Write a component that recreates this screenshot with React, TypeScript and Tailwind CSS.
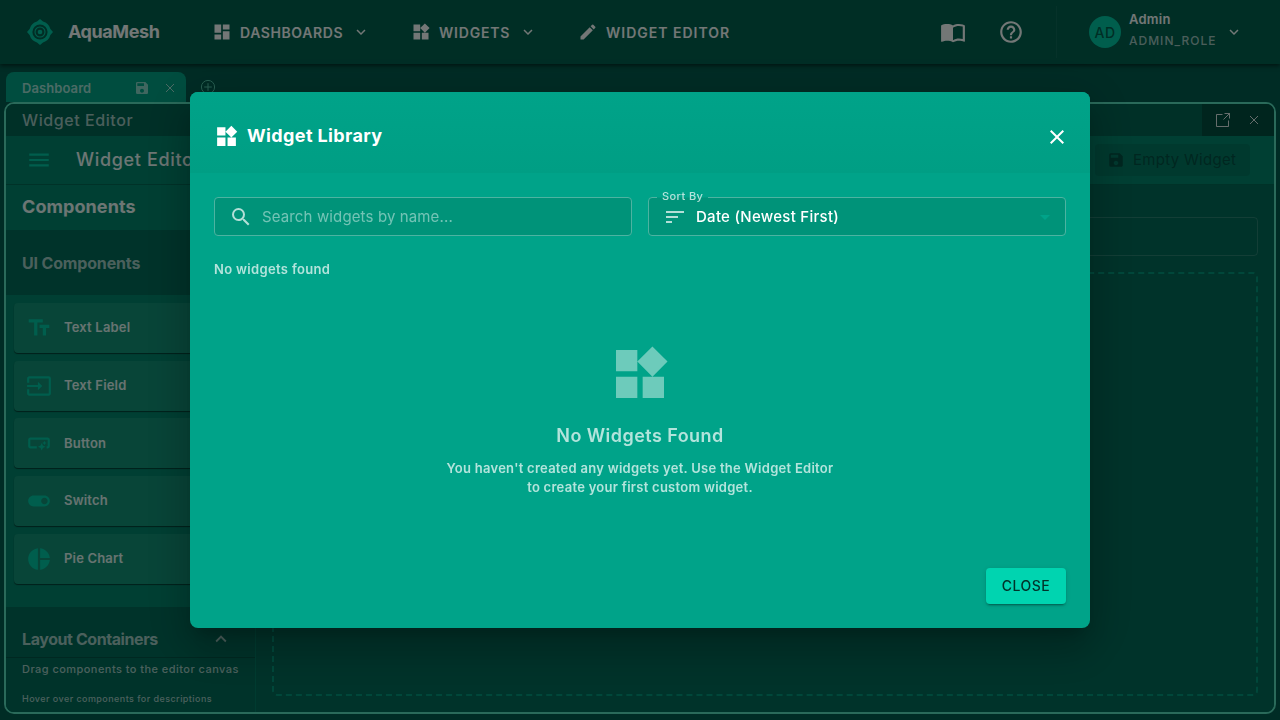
import React from "react";
import {
  MdArrowDropDown, MdClose, MdDashboard, MdEdit, MdHelpOutline, MdInput, MdKeyboardArrowDown,
  MdKeyboardArrowUp, MdMenu, MdPieChart, MdSave, MdSearch, MdSmartButton, MdSort, MdTextFields,
  MdToggleOn, MdWidgets,
} from "react-icons/md";

function Logo() {
  return (
    <svg viewBox="0 0 26 26" className="size-[26px] shrink-0 text-[#00bc9a]">
      <path d="M13 0 L16 2.6 A10.8 10.8 0 0 1 23.4 10 L26 13 L23.4 16 A10.8 10.8 0 0 1 16 23.4 L13 26 L10 23.4 A10.8 10.8 0 0 1 2.6 16 L0 13 L2.6 10 A10.8 10.8 0 0 1 10 2.6 Z" fill="currentColor" />
      <circle cx="13" cy="13" r="7.6" fill="#005c4b" />
      <circle cx="13" cy="13" r="5" fill="none" stroke="currentColor" strokeWidth="1.1" />
      <circle cx="13" cy="13" r="2.3" fill="currentColor" />
    </svg>
  );
}

function BookIcon() {
  return (
    <svg viewBox="0 0 24 24" className="size-[26px]" fill="currentColor">
      <path d="M21 5c-1.11-.35-2.33-.5-3.5-.5-1.95 0-4.05.4-5.5 1.5-1.45-1.1-3.55-1.5-5.5-1.5S2.45 4.9 1 6v14.65c0 .25.25.5.5.5.1 0 .15-.05.25-.05C3.1 20.45 5.05 20 6.5 20c1.95 0 4.05.4 5.5 1.5 1.35-.85 3.8-1.5 5.5-1.5 1.65 0 3.35.3 4.75 1.05.1.05.15.05.25.05.25 0 .5-.25.5-.5V6c-.6-.45-1.25-.75-2-1zm0 13.5c-1.1-.35-2.3-.5-3.5-.5-1.7 0-4.15.65-5.5 1.5V8c1.35-.85 3.8-1.5 5.5-1.5 1.2 0 2.4.15 3.5.5v11.5z" />
    </svg>
  );
}

function ThinClose() {
  return (
    <svg viewBox="0 0 10 10" className="size-[10px]" stroke="currentColor" strokeWidth="1">
      <path d="M1 1 L9 9 M9 1 L1 9" />
    </svg>
  );
}

function PopoutIcon() {
  return (
    <svg viewBox="0 0 14 14" className="size-[14px]" fill="none" stroke="currentColor" strokeWidth="1">
      <path d="M6.5 1.5 H0.5 V13.5 H12.5 V7.5 M8.5 0.5 H13.5 V5.5 M13.5 0.5 L7.5 6.5" />
    </svg>
  );
}

function Header() {
  return (
    <header className="relative flex h-16 shrink-0 items-center bg-[#005c4b] pl-[27px] text-white/90 shadow-[0_2px_4px_rgba(0,0,0,0.5)]">
      <Logo />
      <span className="ml-[15px] w-[144px] pb-px text-[18px] font-bold tracking-[-0.42px]">AquaMesh</span>
      <div className="flex w-[199px] items-center text-[14px] font-semibold">
        <MdDashboard className="size-[20px]" />
        <span className="ml-2 w-[112px] tracking-[0.6px]">DASHBOARDS</span>
        <MdKeyboardArrowDown className="size-[18px]" />
      </div>
      <div className="flex w-[167px] items-center text-[14px] font-semibold">
        <MdWidgets className="size-[20px]" />
        <span className="ml-[8px] w-[80px] tracking-[0.8px]">WIDGETS</span>
        <MdKeyboardArrowDown className="size-[18px]" />
      </div>
      <div className="flex items-center text-[14px] font-semibold">
        <MdEdit className="size-[20px]" />
        <span className="ml-2 tracking-[1px]">WIDGET EDITOR</span>
      </div>
      <div className="ml-auto flex items-center">
        <BookIcon />
        <MdHelpOutline className="ml-[32px] size-[26px]" />
        <div className="ml-[32px] h-[52px] w-px bg-white/5" />
        <div className="ml-8 flex size-8 items-center justify-center rounded-full bg-[#00bc9a] text-[14px] font-medium tracking-[0.6px] text-[#005c4b]">AD</div>
        <div className="ml-2 w-[96px] -translate-y-[2px]">
          <div className="text-[13px] font-semibold leading-[19px] tracking-[0.25px]">Admin</div>
          <div className="mt-[2px] text-[12px] font-medium leading-5 tracking-[1px] text-white/60">ADMIN_ROLE</div>
        </div>
        <MdKeyboardArrowDown className="mr-[37px] size-[18px]" />
      </div>
    </header>
  );
}

const components = [
  { label: "Text Label", icon: MdTextFields },
  { label: "Text Field", icon: MdInput },
  { label: "Button", icon: MdSmartButton },
  { label: "Switch", icon: MdToggleOn },
  { label: "Pie Chart", icon: MdPieChart },
];

function Sidebar() {
  return (
    <aside className="flex w-[250px] shrink-0 flex-col border-r border-[#00705c]/50 bg-[#007e66]">
      <h2 className="flex h-[45px] items-center pb-[2px] pl-4 text-[18px] font-bold tracking-[0.08px] text-white/85">Components</h2>
      <h3 className="flex h-[65px] items-center bg-[#006654] pl-4 text-[16px] font-bold tracking-[-0.16px] text-white/60">UI Components</h3>
      <div className="flex flex-col gap-[7.7px] px-2 pt-2">
        {components.map(({ label, icon: Icon }) => (
          <div key={label} className="flex h-[50px] items-center rounded bg-[#108a70] pl-[12px] shadow-[0_1px_1px_rgba(0,0,0,0.5)]">
            <Icon className="size-[26px] text-[#00bc9a]" />
            <span className="ml-3 text-[13px] font-semibold tracking-[0.18px] text-white/80">{label}</span>
          </div>
        ))}
      </div>
      <div className="mt-auto flex h-[51px] shrink-0 items-center justify-between border-b border-black/20 bg-[#006654] pl-4 pr-[23px] pt-[14px] text-white/60">
        <span className="text-[16px] font-bold tracking-[-0.42px]">Layout Containers</span>
        <MdKeyboardArrowUp className="size-[22px]" />
      </div>
      <div className="h-[54px] shrink-0 bg-[#006654] pl-4 text-white/60">
        <div className="pt-[3px] text-[11px] font-medium leading-[17px] tracking-[0.45px]">Drag components to the editor canvas</div>
        <div className="mt-[15px] text-[9px] font-medium leading-3 tracking-[0.44px]">Hover over components for descriptions</div>
      </div>
    </aside>
  );
}

function Workspace() {
  return (
    <main className="flex min-h-0 flex-1 flex-col bg-[#00584a] px-1 pb-[6px] pt-2">
      <div className="flex h-[30px] shrink-0 items-start pl-[2px]">
        <div className="flex h-[30px] w-[180px] items-center rounded-t-lg bg-[#009b7e] pl-4 pt-[2px] text-white/60">
          <span className="w-[112px] pt-[2px] text-[13px] font-semibold tracking-[0.08px]">Dashboard</span>
          <MdSave className="size-4 text-white/50" />
          <span className="ml-[15px]"><ThinClose /></span>
        </div>
        <svg viewBox="0 0 16 16" className="ml-[14px] mt-[7px] size-4 text-[#50bda2]" fill="none" stroke="currentColor" strokeWidth="1">
          <circle cx="8" cy="8" r="6.6" />
          <path d="M8 4.2 V11.8 M4.2 8 H11.8" />
        </svg>
      </div>
      <section className="flex min-h-0 flex-1 flex-col overflow-hidden rounded-[10px] border-2 border-[#54d4b4] bg-[#006654]">
        <div className="flex h-8 shrink-0 items-center justify-between bg-[#00604f] pl-4 text-white/60">
          <span className="text-[16px] font-medium tracking-[0.58px]">Widget Editor</span>
          <div className="flex h-8 w-[72px] items-center justify-between bg-[#004a3d] pl-[14px] pr-[15px] text-white/80">
            <PopoutIcon />
            <ThinClose />
          </div>
        </div>
        <div className="flex h-[49px] shrink-0 items-center border-b border-black/20 bg-[#007e66] pl-5 pr-6">
          <MdMenu className="size-[26px] text-[#00bc9a]" />
          <span className="-mt-[2px] ml-6 text-[18px] font-medium tracking-[0.65px] text-white/85">Widget Editor</span>
          <div className="ml-auto flex h-8 w-[155px] items-center rounded bg-[#00735d] pl-3 text-[#004d40]">
            <MdSave className="size-[18px]" />
            <span className="ml-2 text-[15px] tracking-[0.3px]">Empty Widget</span>
          </div>
        </div>
        <div className="flex min-h-0 flex-1">
          <Sidebar />
          <div className="flex flex-1 flex-col bg-[#006654] px-4 pb-4 pt-8">
            <div className="h-[39px] shrink-0 rounded border border-white/15" />
            <div className="mt-4 flex-1 rounded-[5px] border-2 border-dashed border-[#008f75]" />
          </div>
        </div>
      </section>
    </main>
  );
}

function WidgetLibrary() {
  return (
    <div className="fixed inset-0 flex items-center justify-center bg-black/50">
      <div role="dialog" aria-label="Widget Library" className="flex h-[536px] w-[900px] flex-col rounded-lg bg-[#00a389] text-white shadow-[0_11px_15px_-7px_rgba(0,0,0,0.2),0_24px_38px_3px_rgba(0,0,0,0.14),0_9px_46px_8px_rgba(0,0,0,0.12)]">
        <div className="flex h-[81px] shrink-0 items-center rounded-t-lg bg-gradient-to-b from-[#00a389] to-[#009e84] pl-6 pr-[21px] pt-2">
          <MdWidgets className="size-[25px]" />
          <h1 className="-mt-[2px] ml-2 text-[18px] font-bold tracking-[0.38px]">Widget Library</h1>
          <MdClose className="ml-auto size-6" />
        </div>
        <div className="flex flex-1 flex-col px-6 pt-6">
          <div className="grid grid-cols-2 gap-4">
            <div className="flex h-[39px] items-center rounded border border-[#4db3a1] bg-[#009379] pl-[14px]">
              <MdSearch className="size-6 text-white/70" />
              <span className="ml-[9px] pt-[2px] text-[15px] tracking-[0.13px] text-white/45">Search widgets by name...</span>
            </div>
            <div className="relative flex h-[39px] items-center rounded border border-[#4db3a1] bg-[#009379] pl-[14px] pr-2">
              <div className="absolute -top-px left-2 h-px w-[51px] bg-[#009b81]" />
              <span className="absolute -top-[10px] left-[13px] text-[11px] font-medium leading-4 tracking-[0.42px] text-white/70">Sort By</span>
              <MdSort className="size-6 text-white/70" />
              <span className="ml-[9px] pt-[2px] text-[15px] font-medium tracking-[0.27px]">Date (Newest First)</span>
              <MdArrowDropDown className="ml-auto size-6 text-[#00a389]" />
            </div>
          </div>
          <p className="mt-6 text-[13px] font-semibold leading-[19px] tracking-[0.34px] text-white/70">No widgets found</p>
          <div className="mt-[63px] flex flex-col items-center text-center text-white/70">
            <MdWidgets className="size-16 text-[#6dcbbb]" />
            <h2 className="mt-[15px] text-[18px] font-semibold leading-[29px] tracking-[0.45px]">No Widgets Found</h2>
            <p className="mt-[9px] w-[420px] text-[13px] font-semibold leading-[19px] tracking-[0.27px]">
              You haven't created any widgets yet. Use the Widget Editor<br />to create your first custom widget.
            </p>
          </div>
        </div>
        <div className="flex h-[60px] shrink-0 justify-end pr-6">
          <button className="h-9 w-20 rounded bg-[#00d4b0] pb-px text-[14px] font-medium tracking-[0.45px] text-[#00332a] shadow-[0_3px_1px_-2px_rgba(0,0,0,0.2),0_2px_2px_rgba(0,0,0,0.14),0_1px_5px_rgba(0,0,0,0.12)]">CLOSE</button>
        </div>
      </div>
    </div>
  );
}

export default function App() {
  return (
    <div className="flex h-screen flex-col overflow-hidden font-['Inter',sans-serif]">
      <Header />
      <Workspace />
      <WidgetLibrary />
    </div>
  );
}
